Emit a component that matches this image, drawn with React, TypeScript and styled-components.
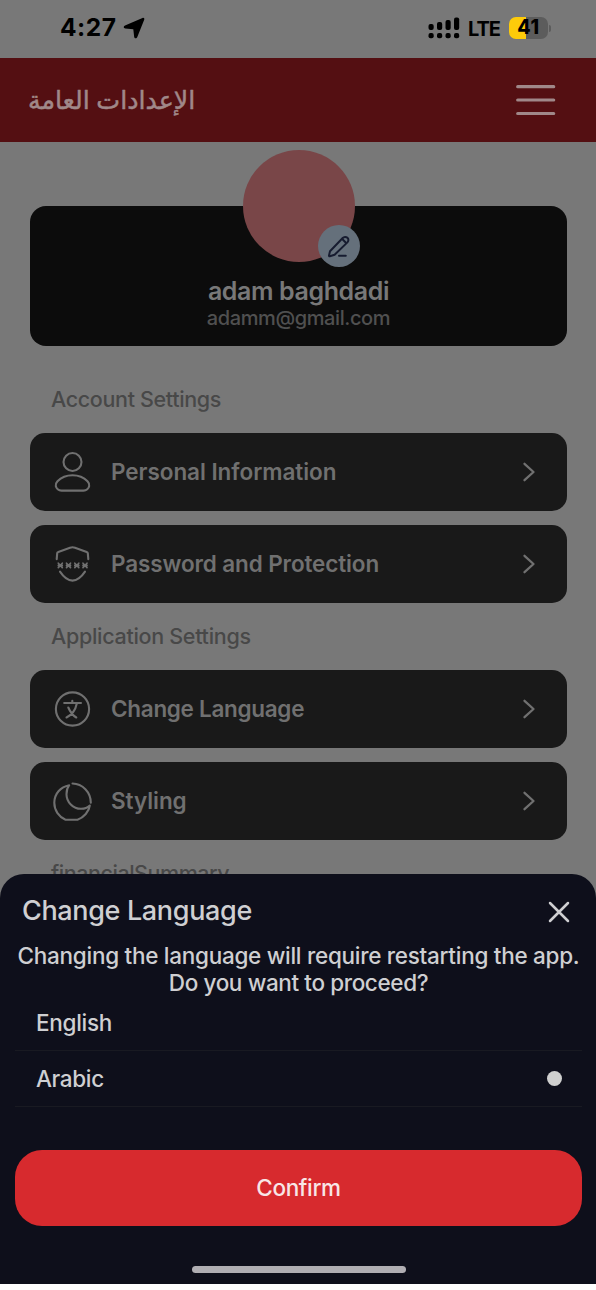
import React from "react";
import styled, { createGlobalStyle } from "styled-components";

const GlobalStyle = createGlobalStyle`
  * { box-sizing: border-box; }
  body {
    margin: 0;
    background: #ffffff;
    font-family: Inter, "Noto Sans", sans-serif;
  }
`;

const Screen = styled.main`
  position: relative;
  width: 596px;
  height: 1284px;
  overflow: hidden;
  background: #787878;
`;

const StatusBar = styled.div`
  display: flex;
  align-items: center;
  justify-content: space-between;
  height: 58px;
  padding: 0 45px 2px 60px;
  color: #000000;
`;

const StatusGroup = styled.div`
  display: flex;
  align-items: center;
`;

const Line = styled.span<{ $size: number; $weight?: number; $spacing?: number; $color?: string }>`
  display: block;
  font-size: ${(p) => p.$size}px;
  font-weight: ${(p) => p.$weight ?? 550};
  letter-spacing: ${(p) => p.$spacing ?? 0}px;
  color: ${(p) => p.$color ?? "inherit"};
  line-height: 1.2;
  white-space: nowrap;
`;

const LocationArrow = styled.svg`
  width: 22px;
  height: 22px;
  margin: 1px 0 0 7px;
`;

const CarrierLabel = styled(Line)`
  margin: 2px 0 0 8px;
`;

const Battery = styled.div`
  display: flex;
  align-items: center;
  justify-content: center;
  width: 39px;
  height: 22px;
  margin-left: 9px;
  border-radius: 7px;
  background: linear-gradient(to right, #fdcb0a 17px, #5c5c5c 17px);
`;

const BatteryTip = styled.i`
  width: 2px;
  height: 7px;
  margin-left: 1px;
  border-radius: 0 2px 2px 0;
  background: #5c5c5c;
`;

const Header = styled.header`
  display: flex;
  align-items: center;
  justify-content: space-between;
  height: 84px;
  padding: 0 40px 0 28px;
  background: #540f12;
  color: #a08889;
`;

const HeaderTitle = styled.h1`
  margin: -3px 0 0;
  font-family: "Noto Sans", "DejaVu Sans", sans-serif;
  font-size: 25.3px;
  font-weight: 500;
  line-height: 30px;
  white-space: nowrap;
  -webkit-text-stroke: 0.5px currentColor;
`;

const Content = styled.div`
  display: flex;
  flex-direction: column;
  padding: 64px 29px 0 30px;
`;

const ProfileCard = styled.section`
  display: flex;
  flex-direction: column;
  align-items: center;
  height: 139.5px;
  margin-bottom: 20.5px;
  border-radius: 16px;
  background: #0c0c0c;
`;

const Avatar = styled.div`
  position: relative;
  flex: none;
  width: 112px;
  height: 112px;
  margin-top: -56px;
  margin-bottom: 14px;
  border-radius: 50%;
  background: #794648;
`;

const EditBadge = styled.button`
  position: absolute;
  left: 75px;
  top: 75px;
  display: flex;
  align-items: center;
  justify-content: center;
  width: 42px;
  height: 42px;
  padding: 0;
  border: 0;
  border-radius: 50%;
  background: #65707b;
`;

const SectionLabel = styled.div`
  display: flex;
  align-items: center;
  height: 67px;
  padding-left: 21px;
`;

const RowList = styled.div`
  display: flex;
  flex-direction: column;
  gap: 14px;
`;

const Row = styled.div`
  display: flex;
  align-items: center;
  height: 78px;
  padding: 0 30px 0 22px;
  border-radius: 15px;
  background: #191919;
  color: #707070;
`;

const RowLabel = styled(Line)`
  margin-top: -2px;
`;

const RowIcon = styled.svg`
  flex: none;
  width: 42px;
  height: 42px;
  margin-right: 17px;
  fill: none;
  stroke: currentColor;
  stroke-width: 2.1;
  stroke-linecap: round;
  stroke-linejoin: round;
`;

const Chevron = styled.svg`
  width: 16px;
  height: 22px;
  margin-left: auto;
  fill: none;
  stroke: currentColor;
  stroke-width: 2.3;
  stroke-linecap: round;
  stroke-linejoin: round;
`;

const Sheet = styled.section`
  position: absolute;
  left: 0;
  right: 0;
  bottom: 0;
  display: flex;
  flex-direction: column;
  height: 410px;
  padding: 0 14px 0 15px;
  border-radius: 24px 24px 0 0;
  background: #0e0f1b;
  color: #cfcfd2;
`;

const SheetHeader = styled.div`
  display: flex;
  align-items: center;
  justify-content: space-between;
  height: 68px;
  padding: 7px 12px 0 7px;
`;

const Message = styled.div`
  display: flex;
  flex-direction: column;
  align-items: center;
  height: 53px;
`;

const Option = styled.div`
  display: flex;
  align-items: center;
  justify-content: space-between;
  height: 56px;
  padding: 0 20.5px 0 21px;
  border-bottom: 1px solid #191a22;
`;

const Dot = styled.i`
  width: 15px;
  height: 15px;
  border-radius: 50%;
  background: #cfcfcf;
`;

const ConfirmButton = styled.button`
  display: flex;
  align-items: center;
  justify-content: center;
  height: 76px;
  margin-top: 43px;
  padding: 0 0 1px;
  border: 0;
  border-radius: 27px;
  background: #d72a2e;
  color: #f8e6e7;
  font-family: inherit;
`;

const HomeIndicator = styled.div`
  width: 214px;
  height: 7px;
  margin: 40px auto 0;
  border-radius: 4px;
  background: #b0aeb3;
`;

const PersonIcon = () => (
  <RowIcon viewBox="0 0 42 42">
    <circle cx="20.5" cy="11" r="9" />
    <path d="M20.5 24.3C27 24.3 32 26.7 35.500 30.300C37 31.900 37.600 33.300 37.200 35C36.700 37.300 34.500 39.600 31.500 39.600H9.500C6.500 39.600 4.300 37.300 3.800 35C3.400 33.300 4 31.900 5.500 30.300C9 26.700 14 24.300 20.500 24.300Z" />
  </RowIcon>
);

const STAR_CENTERS = [8.3, 16.5, 24.8, 33];

const ShieldIcon = () => (
  <RowIcon viewBox="0 0 42 42">
    <path d="M4.700 16.200L5.200 10.200C5.300 9.500 5.700 9.100 6.300 8.900L18 4.700C19.700 4.100 21.300 4.100 23 4.700L34.700 8.900C35.300 9.100 35.700 9.500 35.800 10.200L36.300 16.200" />
    <path d="M8 28.700C11 33.200 16 37.600 20.500 37.600S30 33.200 33 28.700" />
    {STAR_CENTERS.map((x) => (
      <path key={x} strokeWidth="1.700" d={`M${x - 2} 20.200L${x + 2} 24.600M${x + 2} 20.200L${x - 2} 24.600M${x - 2} 22.400H${x + 2}`} />
    ))}
  </RowIcon>
);

const LanguageIcon = () => (
  <RowIcon viewBox="0 0 42 42">
    <circle cx="20.500" cy="21" r="16.600" />
    <path d="M12.200 15H29M20.300 12.800V15M24.800 15.500C23.500 22 19.500 27 14.500 29.500M16.300 19.500C18 23.500 21 27.500 24.300 29.500" />
  </RowIcon>
);

const MoonIcon = () => (
  <RowIcon viewBox="0 0 42 42">
    <path d="M17.200 5.200C8.500 6.800 2.300 14 2.300 22.800C2.300 30.500 7 37 13.500 39.700H25.500C32 37.500 37 31.500 37.800 25.500C35.500 27.800 32.300 28.800 29 28.800C21 28.800 14.500 22 14.500 14.200C14.500 10.500 15.200 7.700 17.200 5.200Z" />
    <path d="M20.500 3.500C30.500 3.700 38.800 12 38.800 22.800" />
  </RowIcon>
);

interface RowProps {
  icon: React.ReactNode;
  label: string;
  spacing?: number;
}

const SettingsRow = ({ icon, label, spacing = -0.05 }: RowProps) => (
  <Row>
    {icon}
    <RowLabel $size={22.5} $weight={630} $spacing={spacing}>{label}</RowLabel>
    <Chevron viewBox="0 0 16 22">
      <path d="M3.500 2.800L12.500 11L3.500 19.200" />
    </Chevron>
  </Row>
);

export default function App() {
  return (
    <>
      <GlobalStyle />
      <Screen>
        <StatusBar>
          <StatusGroup>
            <Line $size={24.500} $weight={700} $spacing={0.5}>4:27</Line>
            <LocationArrow viewBox="0 0 22 22">
              <path d="M19.500 0.900C21 0.500 21.600 1.300 21.200 2.800L14.300 20C13.700 21.800 11.500 21.800 11.200 20L10.300 12.300L2.300 11.400C0.300 11.100 0.200 9.200 2 8.400Z" />
            </LocationArrow>
          </StatusGroup>
          <StatusGroup>
            <svg width="32" height="22" viewBox="0 0 32 22">
              {[0, 1, 2, 3].map((i) => (
                <g key={i}>
                  <rect x={0.5 + i * 8.5} y={[7, 5, 3, 0.5][i]} width="5.200" height={[6, 8, 10, 12.5][i]} rx="2" />
                  <rect x={0.5 + i * 8.5} y="16" width="5.200" height="5.200" rx="2" />
                </g>
              ))}
            </svg>
            <CarrierLabel $size={20} $weight={650} $spacing={-1}>LTE</CarrierLabel>
            <Battery>
              <Line $size={19.5} $weight={800} $spacing={0.6}>41</Line>
            </Battery>
            <BatteryTip />
          </StatusGroup>
        </StatusBar>
        <Header>
          <HeaderTitle dir="rtl" lang="ar">الإعدادات العامة</HeaderTitle>
          <svg width="40" height="32" viewBox="0 0 40 32" stroke="currentColor" strokeWidth="3.200" strokeLinecap="round">
            <path d="M1.700 2.700H37.700M1.700 16H37.700M1.700 29.500H37.700" />
          </svg>
        </Header>
        <Content>
          <ProfileCard>
            <Avatar>
              <EditBadge aria-label="Edit">
                <svg width="24" height="24" viewBox="0 0 24 24" fill="none" stroke="#171c30" strokeWidth="2" strokeLinecap="round" strokeLinejoin="round">
                  <path d="M3 17.200L15.700 4C17 2.600 19 2.500 20.400 3.800S21.700 7 20.400 8.400L7.600 20.800L2.800 22.300C2.200 22.400 1.900 22 2 21.400ZM15 4.800L19.400 9.300M12 21.800H18.800" />
                </svg>
              </EditBadge>
            </Avatar>
            <Line $size={25} $weight={600} $spacing={-0.4}  $color="#787878">adam baghdadi</Line>
            <Line $size={20} $spacing={-0.4} $color="#505050">adamm@gmail.com</Line>
          </ProfileCard>
          <SectionLabel><Line $size={21.5} $spacing={-0.35} $color="#484848">Account Settings</Line></SectionLabel>
          <RowList>
            <SettingsRow icon={<PersonIcon />} label="Personal Information" />
            <SettingsRow icon={<ShieldIcon />} label="Password and Protection" spacing={-0.12} />
          </RowList>
          <SectionLabel><Line $size={21.5} $spacing={-0.3} $color="#484848">Application Settings</Line></SectionLabel>
          <RowList>
            <SettingsRow icon={<LanguageIcon />} label="Change Language" spacing={-0.3} />
            <SettingsRow icon={<MoonIcon />} label="Styling" />
          </RowList>
          <SectionLabel><Line $size={21.5} $spacing={-0.45} $color="#484848">financialSummary</Line></SectionLabel>
        </Content>
        <Sheet>
          <SheetHeader>
            <Line $size={27} $spacing={-0.35}>Change Language</Line>
            <svg width="22" height="22" viewBox="0 0 22 22" stroke="currentColor" strokeWidth="2.500" strokeLinecap="round">
              <path d="M2 2L20 20M20 2L2 20" />
            </svg>
          </SheetHeader>
          <Message>
            <Line $size={22.5} $spacing={-0.28}>Changing the language will require restarting the app.</Line>
            <Line $size={22.5} $spacing={-0.38}>Do you want to proceed?</Line>
          </Message>
          <Option><Line $size={22.5} $spacing={-0.3}>English</Line></Option>
          <Option><Line $size={22.5} $spacing={-0.35}>Arabic</Line><Dot /></Option>
          <ConfirmButton><Line $size={22.5} $spacing={-0.35}>Confirm</Line></ConfirmButton>
          <HomeIndicator />
        </Sheet>
      </Screen>
    </>
  );
}
